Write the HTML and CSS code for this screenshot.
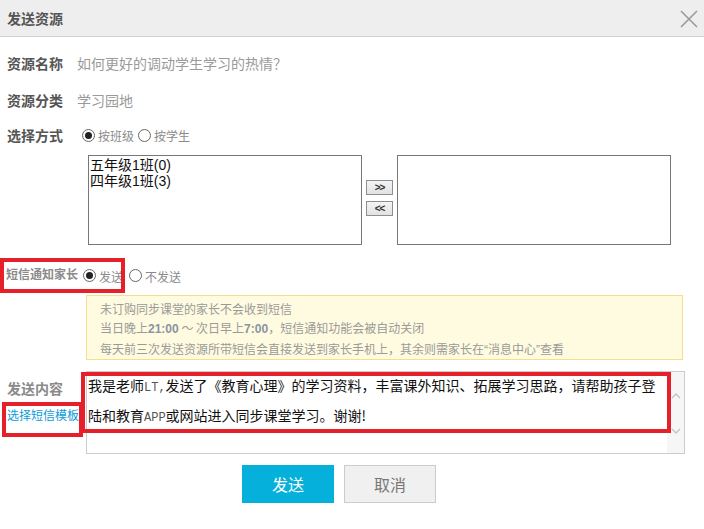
FILE: index.html
```html
<!DOCTYPE html>
<html lang="zh-CN">
<head>
<meta charset="utf-8">
<title>发送资源</title>
<link rel="stylesheet" href="styles.css">
</head>
<body>
<div class="dialog">
  <div class="dlg-head">
    <span class="dlg-title">发送资源</span>
    <svg class="dlg-close" width="18" height="18" viewBox="0 0 18 18"><path d="M1 1L17 17M17 1L1 17" stroke="#9a9a9a" stroke-width="1.6" fill="none"/></svg>
  </div>

  <div class="dlg-body">
    <div class="row r1">
      <span class="lbl">资源名称</span>
      <span class="val">如何更好的调动学生学习的热情？</span>
    </div>
    <div class="row r2">
      <span class="lbl">资源分类</span>
      <span class="val">学习园地</span>
    </div>
    <div class="row r3">
      <span class="lbl">选择方式</span>
      <span class="radio on"></span><span class="opt">按班级</span>
      <span class="radio"></span><span class="opt">按学生</span>
    </div>

    <div class="pick">
      <div class="list">
        <div class="item">五年级1班(0)</div>
        <div class="item">四年级1班(3)</div>
      </div>
      <div class="movers">
        <button class="mv">&gt;&gt;</button>
        <button class="mv">&lt;&lt;</button>
      </div>
      <div class="list"></div>
    </div>

    <div class="row sms">
      <span class="lbl-sm">短信通知家长</span>
      <span class="radio on"></span><span class="opt">发送</span>
      <span class="radio"></span><span class="opt">不发送</span>
    </div>

    <div class="notice">
      <p>未订购同步课堂的家长不会收到短信</p>
      <p>当日晚上<b>21:00</b> ～ 次日早上<b>7:00</b>，短信通知功能会被自动关闭</p>
      <p>每天前三次发送资源所带短信会直接发送到家长手机上，其余则需家长在<span class="q">“</span>消息中心<span class="q">”</span>查看</p>
    </div>

    <div class="content">
      <div class="side">
        <div class="lbl-c">发送内容</div>
        <a class="tpl" href="#">选择短信模板</a>
      </div>
      <div class="msg">
        <div class="msg-text">我是老师<span class="lat">LT,</span>发送了《教育心理》的学习资料，丰富课外知识、拓展学习思路，请帮助孩子登<br>陆和教育<span class="lat">APP</span>或网站进入同步课堂学习。谢谢!</div>
        <div class="sbar">
          <svg width="12" height="8" viewBox="0 0 12 8"><path d="M2 6L6 2L10 6" stroke="#c4c4c4" stroke-width="1.4" fill="none"/></svg>
          <svg width="12" height="8" viewBox="0 0 12 8"><path d="M2 2L6 6L10 2" stroke="#c4c4c4" stroke-width="1.4" fill="none"/></svg>
        </div>
      </div>
    </div>

    <div class="actions">
      <button class="btn primary">发送</button>
      <button class="btn">取消</button>
    </div>
  </div>

  <!-- highlight frames drawn on top of the form -->
  <div class="mark mark-sms"></div>
  <div class="mark mark-tpl"></div>
  <div class="mark mark-msg"></div>
</div>
</body>
</html>
```
FILE: styles.css
```css
* { box-sizing: border-box; }

html, body {
  margin: 0;
  padding: 0;
  background: #fff;
}

body {
  font-family: "Noto Sans CJK SC", "Liberation Sans", sans-serif;
  font-size: 14px;
  color: #555;
  text-spacing-trim: space-all;
}

.dialog {
  position: relative;
  width: 704px;
  height: 529px;
  background: #fff;
}

.dlg-head {
  height: 37px;
  background: #eeeeee;
  border-bottom: 1px solid #d2d2d2;
  display: flex;
  align-items: center;
  justify-content: space-between;
  padding: 0 6px 0 7px;
}

.dlg-title {
  font-size: 14px;
  font-weight: bold;
  color: #555;
  line-height: 18px;
}

.dlg-close {
  display: block;
  margin-top: 1px;
}

.dlg-body {
  padding-top: 7px;
}

.row {
  display: flex;
  align-items: center;
}

.r1, .r2 { height: 37px; }
.r3 { height: 34px; }

.lbl {
  width: 77px;
  padding-left: 7px;
  font-weight: bold;
  color: #555;
  line-height: 18px;
}

.val {
  color: #9a9a9a;
  line-height: 18px;
}

.radio {
  display: inline-block;
  width: 13px;
  height: 13px;
  border-radius: 50%;
  border: 1px solid #666;
  background: #fff;
  position: relative;
  flex: none;
  margin-left: 5px;
}

.radio.on::after {
  content: "";
  position: absolute;
  left: 2px;
  top: 2px;
  width: 7px;
  height: 7px;
  border-radius: 50%;
  background: #222;
}

.opt {
  font-size: 12px;
  color: #8a8a8a;
  margin-left: 3px;
  line-height: 16px;
  padding-top: 2px;
}

.r3 .opt + .radio { margin-left: 4px; }

/* class picker: two list boxes with move buttons */
.pick {
  display: flex;
  align-items: center;
  margin: 3px 0 0 88px;
  height: 90px;
}

.list {
  width: 274px;
  height: 90px;
  border: 1px solid #777;
  background: #fff;
  padding: 1px 0 0 1px;
}

.item {
  font-family: "Liberation Sans", "Noto Sans CJK SC", sans-serif;
  font-size: 14px;
  line-height: 16px;
  color: #111;
  white-space: nowrap;
}

.movers {
  width: 35px;
  display: flex;
  flex-direction: column;
  align-items: center;
  gap: 6px;
  margin-top: -4px;
}

.mv {
  width: 27px;
  height: 15px;
  padding: 0;
  border: 1px solid #8e8e8e;
  background: linear-gradient(#f4f4f4, #e2e2e2);
  font-family: "Liberation Sans", sans-serif;
  font-size: 10px;
  font-weight: bold;
  letter-spacing: -1px;
  color: #333;
  line-height: 13px;
}

/* SMS option */
.sms {
  margin-top: 14px;
  height: 33px;
}

.lbl-sm {
  width: 78px;
  padding-left: 6px;
  font-size: 12px;
  font-weight: bold;
  color: #8a8a8a;
  line-height: 16px;
  margin-top: -4px;
}

.sms .opt + .radio { margin-left: 6px; }

.notice {
  margin: 3px 0 0 86px;
  width: 597px;
  height: 65px;
  background: #fffbe0;
  border: 1px solid #f4df8d;
  padding: 3px 0 0 13px;
}

.notice p {
  margin: 0;
  font-size: 12px;
  line-height: 19px;
  color: #9a9a9a;
  white-space: nowrap;
}

.notice b {
  font-family: "Liberation Sans", sans-serif;
  color: #8a94a2;
}

.notice .q {
  font-family: "Liberation Sans", sans-serif;
}

/* message content */
.content {
  display: flex;
  margin-top: 11px;
}

.side {
  width: 86px;
  padding: 8px 0 0 7px;
}

.lbl-c {
  font-size: 14px;
  line-height: 18px;
  color: #8a8a8a;
  font-weight: bold;
}

.tpl {
  display: block;
  margin-top: 9px;
  font-size: 12px;
  line-height: 18px;
  color: #0b9bd7;
  text-decoration: none;
}

.msg {
  width: 599px;
  height: 83px;
  border: 1px solid #cccccc;
  display: flex;
  justify-content: space-between;
}

.msg-text {
  padding: 0 0 0 1px;
  font-size: 14px;
  line-height: 27px;
  color: #111;
  white-space: nowrap;
}

.lat {
  font-family: "Liberation Mono", monospace;
  font-size: 12px;
  color: #555;
}

.sbar {
  width: 17px;
  background: #f6f6f6;
  display: flex;
  flex-direction: column;
  justify-content: space-between;
  align-items: center;
  padding: 20px 0 18px;
}

.sbar svg { display: block; }

.actions {
  display: flex;
  gap: 10px;
  margin-top: 11px;
  padding-left: 242px;
}

.btn {
  width: 92px;
  height: 38px;
  border: 1px solid #cccccc;
  background: #f0f0f0;
  color: #777;
  font-family: "Noto Sans CJK SC", sans-serif;
  font-size: 16px;
  padding: 0;
}

.btn.primary {
  background: #05b1da;
  border-color: #05b1da;
  color: #fff;
}

/* red highlight frames */
.mark {
  position: absolute;
  border: 4px solid #e5202a;
  pointer-events: none;
}

.mark-sms { left: 0; top: 258px; width: 125px; height: 35px; }
.mark-tpl { left: 2px; top: 402px; width: 81px; height: 35px; }
.mark-msg { left: 81px; top: 372px; width: 590px; height: 61px; }
```
